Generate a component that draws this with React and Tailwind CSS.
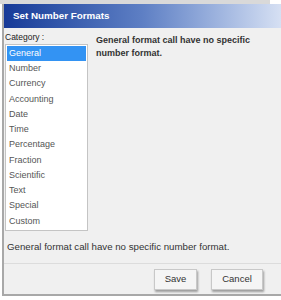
import React, { useState } from 'react';

const categories = [
  'General',
  'Number',
  'Currency',
  'Accounting',
  'Date',
  'Time',
  'Percentage',
  'Fraction',
  'Scientific',
  'Text',
  'Special',
  'Custom',
];

const App = () => {
  const [selected, setSelected] = useState('General');

  return (
    <div className="w-[281px] h-[300px] bg-white overflow-hidden font-['Liberation_Sans',Arial,sans-serif]">
      {/* page content peeking above the dialog */}
      <div className="h-[4px] w-[270px] bg-[#d9d9d9]" />

      <div className="ml-[2px] h-[292px] flex flex-col border-l-2 border-b-2 border-[#a8a8a8]">
        <div className="h-[24px] shrink-0 flex items-center pl-[9px] bg-gradient-to-r from-[#173a98] via-[#5e7fc4] to-[#d6e0f3] text-white font-bold text-[9.8px]">
          Set Number Formats
        </div>

        <div className="flex-1 bg-[#f0f0f0] flex flex-col">
          <div className="flex pl-[1px] pt-[3px] h-[206px]">
            <div className="w-[83px] shrink-0">
              <div className="text-[8.5px] text-[#222] leading-[12px] h-[13px]">Category :</div>
              <ul className="bg-white border border-[#c4c4c4] p-[1px] text-[9px] text-[#555]">
                {categories.map((c) => (
                  <li
                    key={c}
                    onClick={() => setSelected(c)}
                    className={
                      c === selected
                        ? 'h-[15.25px] flex items-center pl-[2px] bg-[#3393f3] text-white cursor-default'
                        : 'h-[15.25px] flex items-center pl-[2px] cursor-default'
                    }
                  >
                    {c}
                  </li>
                ))}
              </ul>
            </div>
            <div className="pl-[8px] pt-[3px] pr-[22px] text-[9px] font-bold text-[#333] leading-[12.5px]">
              General format call have no specific number format.
            </div>
          </div>

          <div className="pl-[3px] pt-[6px] text-[9.7px] text-[#333] h-[29px]">
            General format call have no specific number format.
          </div>

          <div className="flex-1 border-t border-[#dcdcdc] flex justify-end items-start pt-[5px] pr-[18px] gap-[14px]">
            <button className="w-[43px] h-[21px] bg-[#f5f5f5] border border-[#c8c8c8] shadow-[1px_2px_2px_rgba(0,0,0,0.35)] text-[9.5px] text-[#333]">
              Save
            </button>
            <button className="w-[52px] h-[21px] bg-[#f5f5f5] border border-[#c8c8c8] shadow-[1px_2px_2px_rgba(0,0,0,0.35)] text-[9.5px] text-[#333]">
              Cancel
            </button>
          </div>
        </div>
      </div>
    </div>
  );
};

export default App;
